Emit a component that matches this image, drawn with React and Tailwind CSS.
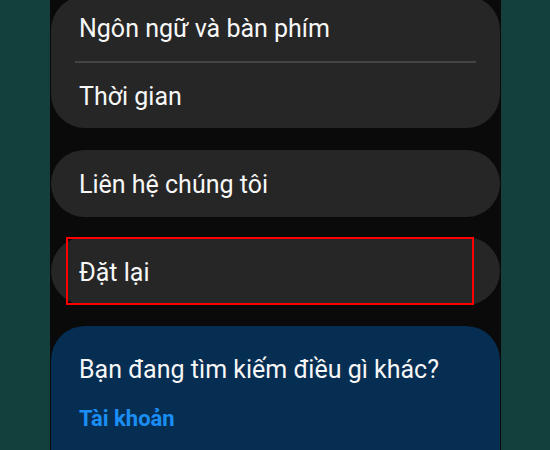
export default function App() {
    return (
        <div className="h-[450px] w-[550px] overflow-hidden bg-[#13403d] font-['Roboto',sans-serif]">
            <div className="relative ml-[50px] flex h-[450px] w-[451px] flex-col bg-[#0a0a0a] px-px">
                {/* Ngôn ngữ / Thời gian */}
                <div className="-mt-[4px] rounded-[34px] bg-[#262626]">
                    <div className="flex h-[65px] items-center pl-[28px] text-[25px] text-[#f7f7f7]">
                        Ngôn ngữ và bàn phím
                    </div>
                    <div className="mx-[24px] h-[2px] bg-[#444444]" />
                    <div className="flex h-[65px] items-center pl-[28px] pt-[3px] text-[25px] text-[#f7f7f7]">
                        Thời gian
                    </div>
                </div>

                <div className="mt-[22px] flex h-[67px] items-center rounded-[34px] bg-[#262626] pl-[28px] pt-[3px] text-[25px] text-[#f7f7f7]">
                    Liên hệ chúng tôi
                </div>

                <div className="mt-[20px] flex h-[68px] items-center rounded-[34px] bg-[#262626] pl-[28px] pt-[3px] text-[25px] text-[#f7f7f7]">
                    Đặt lại
                </div>

                <div className="mt-[21px] flex-1 rounded-t-[34px] bg-[#062e52] pl-[28px] pt-[27px]">
                    <p className="text-[25px] leading-[34px] text-[#f7f7f7]">Bạn đang tìm kiếm điều gì khác?</p>
                    <p className="mt-[17px] text-[22px] font-bold leading-[30px] text-[#1b8ef5]">Tài khoản</p>
                </div>

                {/* highlight */}
                <div className="absolute left-[16px] top-[237px] h-[68px] w-[408px] border-2 border-[#ff0000]" />
            </div>
        </div>
    );
}
